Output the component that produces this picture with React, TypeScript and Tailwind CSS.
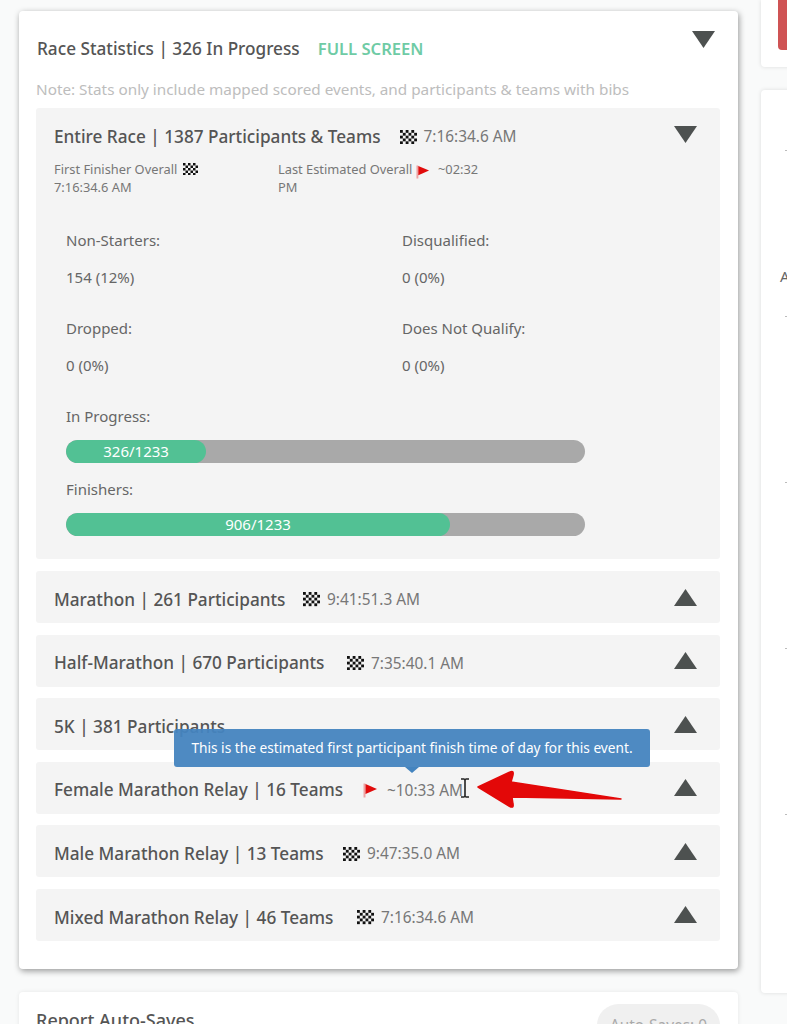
import React from 'react';

function Checker({ size = 17 }: { size?: number }) {
  const cells = [];
  for (let y = 0; y < 5; y++) {
    for (let x = 0; x < 6; x++) {
      if ((x + y) % 2 === 0) cells.push(<rect key={`${x}-${y}`} x={x * 2.5} y={y * 2.5} width="2.5" height="2.5" fill="#111" />);
    }
  }
  return (
    <svg width={size} height={(size * 12.5) / 15} viewBox="0 0 15 12.5" className="inline-block shrink-0">
      {cells}
    </svg>
  );
}

function RedFlag({ size = 15 }: { size?: number }) {
  return (
    <svg width={size} height={size} viewBox="0 0 15 15" className="inline-block shrink-0">
      <rect x="0.5" y="0.5" width="2" height="14" fill="#eda3a3" />
      <path d="M2.5 1 L14 6 L2.5 11 Z" fill="#e10b0b" />
    </svg>
  );
}

function Triangle({ up = false }: { up?: boolean }) {
  return (
    <svg width="23" height="17" viewBox="0 0 23 17" className="shrink-0">
      <path d={up ? 'M11.5 0 L23 17 L0 17 Z' : 'M0 0 L23 0 L11.5 17 Z'} fill="#4d5150" />
    </svg>
  );
}

function Stat({ label, value }: { label: string; value: string }) {
  return (
    <div className="h-[88px]">
      <p className="text-[15px] leading-[20px] text-[#666]">{label}</p>
      <p className="mt-[17px] text-[15px] leading-[20px] text-[#666]">{value}</p>
    </div>
  );
}

function Bar({ label, text, pct }: { label: string; text: string; pct: number }) {
  return (
    <div className="h-[73px]">
      <p className="text-[15px] leading-[20px] text-[#666]">{label}</p>
      <div className="mt-[14px] h-[23px] w-[519px] overflow-hidden rounded-full bg-[#a9a9a9]">
        <div
          className="flex h-full items-center justify-center rounded-full bg-[#52c194] text-[15px] text-white"
          style={{ width: `${pct}%` }}
        >
          {text}
        </div>
      </div>
    </div>
  );
}

function EventRow({ title, titleClass, time, est }: { title: string; titleClass?: string; time?: string; est?: boolean }) {
  return (
    <div className="flex h-[52px] items-center justify-between rounded-[3px] bg-[#f4f4f4] pl-[18px] pr-[23px]">
      <div className="flex items-center pt-[5px]">
        <span className={`whitespace-nowrap text-[17.2px] font-medium text-[#555] ${titleClass ?? ''}`}>{title}</span>
        {time && (est ? (
          <span className="ml-[21px] flex"><RedFlag /></span>
        ) : (
          <span className="ml-[20px] flex"><Checker /></span>
        ))}
        {time && <span className={`text-[15.4px] text-[#777] ${est ? 'ml-[9px]' : 'ml-[7px]'}`}>{time}</span>}
      </div>
      <Triangle up />
    </div>
  );
}

export default function App() {
  return (
    <div
      className="relative flex h-[1024px] w-[787px] overflow-hidden bg-[#f9fafa]"
      style={{ fontFamily: '"Noto Sans", "Open Sans", sans-serif' }}
    >
      {/* Left column */}
      <div className="ml-[19px] mt-[11px] w-[719px] shrink-0">
        <div className="h-[958px] rounded-[4px] bg-white pl-[17px] pr-[18px] pt-[23px] shadow-[1px_2px_6px_rgba(0,0,0,0.4)]">
          <div className="flex items-start justify-between">
            <div className="ml-[1px] flex h-[30px] items-center">
              <h2 className="text-[17.2px] font-medium text-[#555]">Race Statistics | 326 In Progress</h2>
              <span className="ml-[18px] text-[16.6px] font-semibold text-[#6fcba5]">FULL SCREEN</span>
            </div>
            <span className="mr-[5px] mt-[-3px]"><Triangle /></span>
          </div>
          <p className="mt-[15px] whitespace-nowrap text-[15.3px] leading-[20px] text-[#bdbdbd]">
            Note: Stats only include mapped scored events, and participants &amp; teams with bibs
          </p>

          {/* Entire race */}
          <div className="mt-[9px] h-[451px] rounded-[3px] bg-[#f4f4f4] pl-[18px] pr-[23px] pt-[16px]">
            <div className="flex items-start justify-between">
              <div className="flex h-[26px] items-center">
                <span className="text-[17.2px] font-medium text-[#555]">Entire Race | 1387 Participants &amp; Teams</span>
                <span className="ml-[19px] flex"><Checker /></span>
                <span className="ml-[7px] text-[15.4px] text-[#777]">7:16:34.6 AM</span>
              </div>
              <span className="mt-[2px]"><Triangle /></span>
            </div>
            <div className="mt-[10px] flex text-[12.85px] leading-[18px] text-[#777]">
              <div className="w-[224px]">
                <div className="flex items-center gap-[6px]">First Finisher Overall <Checker size={15} /></div>
                <div>7:16:34.6 AM</div>
              </div>
              <div className="w-[205px]">
                <span>Last Estimated Overall </span>
                <span className="-my-[2px] inline-block align-middle"><RedFlag size={14} /></span>
                <span className="ml-[5px]"> ~02:32 PM</span>
              </div>
            </div>
            <div className="ml-[12px] mt-[34px] grid w-[600px] grid-cols-[336px_1fr]">
              <Stat label="Non-Starters:" value="154 (12%)" />
              <Stat label="Disqualified:" value="0 (0%)" />
              <Stat label="Dropped:" value="0 (0%)" />
              <Stat label="Does Not Qualify:" value="0 (0%)" />
            </div>
            <div className="ml-[12px]">
              <Bar label="In Progress:" text="326/1233" pct={27} />
              <Bar label="Finishers:" text="906/1233" pct={74} />
            </div>
          </div>

          <div className="mt-[12px] flex flex-col gap-[11.6px]">
            <EventRow title="Marathon | 261 Participants" titleClass="w-[229px]" time="9:41:51.3 AM" />
            <EventRow title="Half-Marathon | 670 Participants" titleClass="w-[273px]" time="7:35:40.1 AM" />
            <EventRow title="5K | 381 Participants" />
            <EventRow title="Female Marathon Relay | 16 Teams" titleClass="w-[288px]" time="~10:33 AM" est />
            <EventRow title="Male Marathon Relay | 13 Teams" titleClass="w-[269px]" time="9:47:35.0 AM" />
            <EventRow title="Mixed Marathon Relay | 46 Teams" titleClass="w-[283px]" time="7:16:34.6 AM" />
          </div>
        </div>

        <div className="mt-[23px] flex h-[60px] items-start justify-between rounded-[4px] bg-white pl-[17px] pr-[18px] pt-[12px] shadow-[0_0_4px_rgba(0,0,0,0.08)]">
          <h2 className="mt-[3px] text-[18px] font-medium text-[#555]">Report Auto-Saves</h2>
          <span className="rounded-full bg-[#f0f0f0] px-[13px] py-[10px] text-[15.4px] text-[#aaa]">Auto-Saves: 0</span>
        </div>
      </div>

      {/* Right column */}
      <div className="ml-[23px] flex w-[60px] shrink-0 flex-col">
        <div className="h-[67px] rounded-b-[4px] bg-white pl-[17px] shadow-[0_0_4px_rgba(0,0,0,0.12)]">
          <div className="h-[50px] w-[60px] rounded-b-[4px] bg-[#cf5354]" />
        </div>
        <div className="mt-[23px] h-[903px] rounded-[4px] bg-white text-[#666] shadow-[0_0_4px_rgba(0,0,0,0.12)]">
          <div className="ml-[24px] mt-[60px] h-[1px] w-[2px] bg-[#bbb]" />
          <p className="ml-[19px] mt-[115px] text-[15px] leading-[20px]">A</p>
          <div className="ml-[24px] mt-[30px] h-[1px] w-[2px] bg-[#bbb]" />
          <div className="ml-[24px] mt-[165px] h-[1px] w-[2px] bg-[#bbb]" />
          <div className="ml-[24px] mt-[165px] h-[1px] w-[2px] bg-[#bbb]" />
          <div className="ml-[24px] mt-[165px] h-[1px] w-[2px] bg-[#bbb]" />
        </div>
      </div>

      {/* Tooltip */}
      <div className="absolute left-[174px] top-[729px] flex h-[38px] w-[476px] items-center justify-center rounded-[3px] bg-[#4484bf]/95 text-[13.7px] text-white">
        This is the estimated first participant finish time of day for this event.
        <div className="absolute bottom-[-6px] left-[231px] h-0 w-0 border-x-[7px] border-t-[6px] border-x-transparent border-t-[#4484bf]" />
      </div>

      {/* Annotation arrow */}
      <svg className="absolute left-[470px] top-[765px]" width="160" height="48" viewBox="0 0 160 48">
        <path
          d="M8 22 L40 7 Q44 5 43 10 L41 17 L151 34 L42 32 L43 39 Q44 44 39 41 Z"
          fill="#e30808"
          stroke="#e30808"
          strokeWidth="1.5"
          strokeLinejoin="round"
        />
      </svg>

      {/* Text cursor */}
      <svg className="absolute left-[459px] top-[778px]" width="12" height="20" viewBox="0 0 12 20">
        <path d="M2 1 H5 Q6 1 6 3 V17 Q6 19 5 19 H2 M10 1 H7 Q6 1 6 3 V17 Q6 19 7 19 H10" fill="none" stroke="#222" strokeWidth="1.6" />
      </svg>
    </div>
  );
}
